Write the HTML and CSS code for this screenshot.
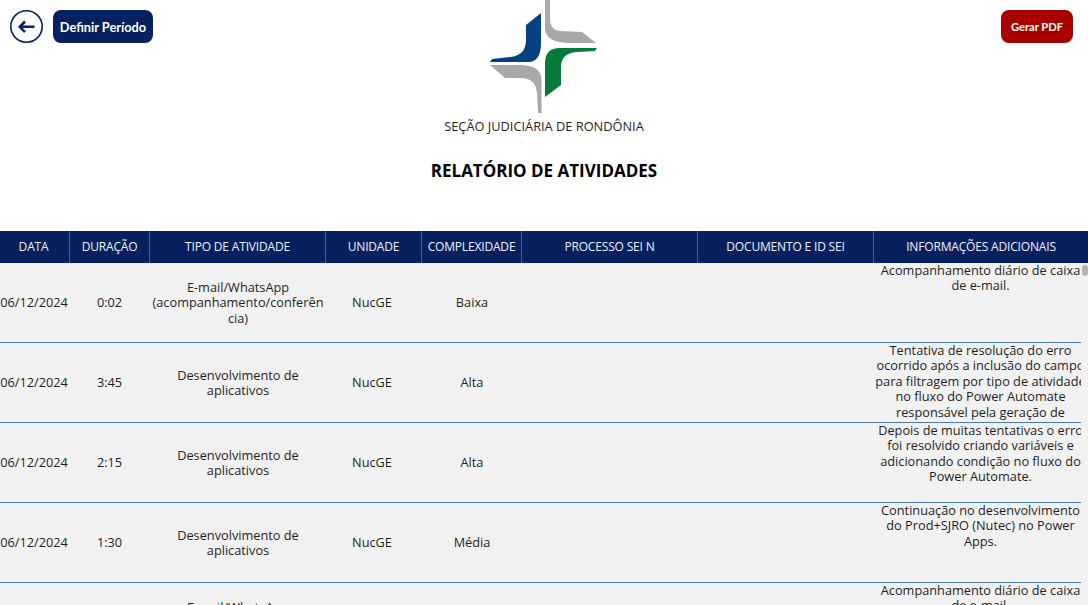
FILE: index.html
```html
<!DOCTYPE html>
<html>
  <head>
    <title>Relatório de Atividades</title>
    <link rel="stylesheet" href="styles.css">
  </head>
  <body>
    <div class="top">
      <div class="top-left">
        <button class="back-btn" title="voltar">
          <svg width="33" height="33" viewBox="0 0 33 33">
            <circle cx="16.500" cy="16.500" r="15.700" fill="white" stroke="#072060" stroke-width="1.600" />
            <path d="M15 11.500 L9.800 16.800 L15 22.100 M10.500 16.800 H24.500" fill="none" stroke="#072060" stroke-width="2.600" />
          </svg>
        </button>
        <button class="btn period-btn">Definir Período</button>
      </div>

      <div class="top-center">
        <svg class="logo" width="108" height="114" viewBox="490 0 108 114">
          <path fill="#04427f" d="M541 13 V43 C541 55 537 62 528 62 H490 L492 59 L510 57 C521 56 526 50 526 40 V25 Z" />
          <path fill="#a9a9a9" d="M545 0 H550 V18 C550 26 553 30 560 31 L582 32 L596 43 H570 C554 43 545 38 545 28 Z" />
          <path fill="#067a38" d="M597 48 L595 51 L577 52 C566 53 561 58 561 67 V85 L545 97 V63 C545 53 550 48 560 48 Z" />
          <path fill="#a9a9a9" d="M490 65 H520 C534 65 541.500 70 541.500 80 V113 L538 113 L537 93 C536 83 531 78 520 78 H505 Z" />
        </svg>
        <p class="org">SEÇÃO JUDICIÁRIA DE RONDÔNIA</p>
        <p class="title">RELATÓRIO DE ATIVIDADES</p>
      </div>

      <div class="top-right">
        <button class="btn pdf-btn">Gerar PDF</button>
      </div>
    </div>

    <div class="table-head">
      <div class="head-cell">DATA</div>
      <div class="head-cell">DURAÇÃO</div>
      <div class="head-cell">TIPO DE ATIVIDADE</div>
      <div class="head-cell">UNIDADE</div>
      <div class="head-cell">COMPLEXIDADE</div>
      <div class="head-cell">PROCESSO SEI N</div>
      <div class="head-cell">DOCUMENTO E ID SEI</div>
      <div class="head-cell">INFORMAÇÕES ADICIONAIS</div>
    </div>

    <div class="table-body">
      <div class="row">
        <div class="cell date">06/12/2024</div>
        <div class="cell">0:02</div>
        <div class="cell kind">E-mail/WhatsApp (acompanhamento/conferência)</div>
        <div class="cell unit">NucGE</div>
        <div class="cell">Baixa</div>
        <div class="cell"></div>
        <div class="cell"></div>
        <div class="cell info">Acompanhamento diário de caixa de e-mail.</div>
      </div>
      <div class="row">
        <div class="cell date">06/12/2024</div>
        <div class="cell">3:45</div>
        <div class="cell kind">Desenvolvimento de aplicativos</div>
        <div class="cell unit">NucGE</div>
        <div class="cell">Alta</div>
        <div class="cell"></div>
        <div class="cell"></div>
        <div class="cell info">Tentativa de resolução do erro ocorrido após a inclusão do campo para filtragem por tipo de atividade no fluxo do Power Automate responsável pela geração de relatórios.</div>
      </div>
      <div class="row">
        <div class="cell date">06/12/2024</div>
        <div class="cell">2:15</div>
        <div class="cell kind">Desenvolvimento de aplicativos</div>
        <div class="cell unit">NucGE</div>
        <div class="cell">Alta</div>
        <div class="cell"></div>
        <div class="cell"></div>
        <div class="cell info">Depois de muitas tentativas o erro foi resolvido criando variáveis e adicionando condição no fluxo do Power Automate.</div>
      </div>
      <div class="row">
        <div class="cell date">06/12/2024</div>
        <div class="cell">1:30</div>
        <div class="cell kind">Desenvolvimento de aplicativos</div>
        <div class="cell unit">NucGE</div>
        <div class="cell">Média</div>
        <div class="cell"></div>
        <div class="cell"></div>
        <div class="cell info">Continuação no desenvolvimento do Prod+SJRO (Nutec) no Power Apps.</div>
      </div>
      <div class="row">
        <div class="cell date">06/12/2024</div>
        <div class="cell">0:02</div>
        <div class="cell kind">E-mail/WhatsApp (acompanhamento/conferência)</div>
        <div class="cell unit">NucGE</div>
        <div class="cell">Baixa</div>
        <div class="cell"></div>
        <div class="cell"></div>
        <div class="cell info">Acompanhamento diário de caixa de e-mail.</div>
      </div>
      <div class="scroll-thumb"></div>
    </div>
  </body>
</html>
```

FILE: styles.css
```css
html,
body {
  height: 100%;
}

body {
  margin: 0;
  overflow: hidden;
  background-color: white;
  color: #1f1f1f;
  font-family: "Open Sans", sans-serif;
  font-size: 12.75px;
}

.top {
  display: grid;
  grid-template-columns: 1fr auto 1fr;
  height: 231px;
}

.top-left {
  display: flex;
  align-items: flex-start;
  gap: 10px;
  padding: 10px 0 0 10px;
}

.top-right {
  display: flex;
  justify-content: flex-end;
  padding: 10px 15px 0 0;
}

.top-center {
  display: flex;
  flex-direction: column;
  align-items: center;
}

.logo {
  display: block;
}

.org {
  margin: 4px 0 0 0;
  font-size: 12.8px;
  line-height: 17px;
}

.title {
  margin: 24px 0 0 0;
  color: black;
  font-size: 17px;
  font-weight: 700;
  line-height: 24px;
}

.back-btn {
  width: 33px;
  height: 33px;
  padding: 0;
  background: none;
  border: none;
}

.back-btn svg {
  display: block;
}

.btn {
  height: 33px;
  padding: 0;
  border: none;
  border-radius: 8px;
  color: white;
  font-family: Lato, sans-serif;
  font-weight: 700;
}

.period-btn {
  width: 100px;
  background-color: #072060;
  font-size: 12.75px;
}

.pdf-btn {
  width: 72px;
  background-color: #a80000;
  font-size: 11.2px;
}

.table-head {
  display: grid;
  grid-template-columns: 70px 80px 176px 96px 100px 176px 176px 1fr;
  height: 32px;
  background-color: #072060;
}

.head-cell {
  display: flex;
  align-items: center;
  justify-content: center;
  box-sizing: border-box;
  padding-bottom: 2px;
  border-right: solid 1px #4a5d8f;
  color: #eef0f6;
  font-size: 12px;
  font-weight: 500;
  letter-spacing: -0.17px;
}

.head-cell:first-child {
  padding-right: 2px;
}

.head-cell:last-child {
  border-right: none;
}

.table-body {
  position: relative;
  height: 342px;
  overflow: hidden;
  background-color: #f1f1f1;
}

.row {
  display: grid;
  grid-template-columns: 69px 81px 176px 96px 100px 176px 176px 215px;
  box-sizing: border-box;
  width: 1081px;
  height: 80px;
  overflow: hidden;
  border-bottom: solid 1px #3f7fb3;
}

.cell {
  display: flex;
  align-items: center;
  justify-content: center;
  overflow: hidden;
  line-height: 15.4px;
  text-align: center;
  overflow-wrap: anywhere;
}

.date {
  padding-right: 1px;
}

.kind {
  padding-top: 1px;
}

.unit {
  padding-right: 4px;
}

.info {
  display: block;
  padding-right: 2px;
}

.scroll-thumb {
  position: absolute;
  top: 2px;
  right: 0;
  width: 6px;
  height: 11px;
  background-color: #b4b4b4;
  border-radius: 3px;
}
```
